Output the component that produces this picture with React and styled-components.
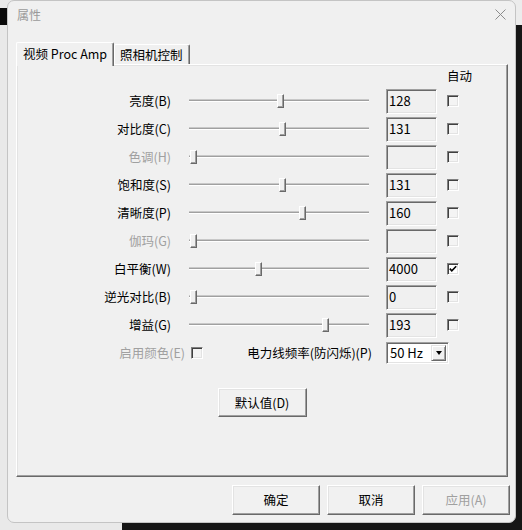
import React from 'react';
import styled, { createGlobalStyle } from 'styled-components';

const GlobalStyle = createGlobalStyle`
  html, body {
    margin: 0;
    padding: 0;
  }
  body {
    font-family: "Noto Sans CJK SC", "Noto Sans", sans-serif;
    font-size: 12.5px;
    color: #000;
  }
`;

const Desktop = styled.div`
  width: 522px;
  height: 530px;
  overflow: hidden;
  box-sizing: border-box;
  padding-left: 7px;
  background:
    linear-gradient(#0b0b0b, #0b0b0b) 0 8px / 7px 17px no-repeat,
    linear-gradient(#e9e9e9, #e9e9e9) 0 0 / 122px 100% no-repeat,
    linear-gradient(#ececec, #ececec) 0 0 / 100% 25px no-repeat,
    #161616;
`;

const Window = styled.div`
  width: 509px;
  height: 523px;
  box-sizing: border-box;
  background: #f0f0f0;
  border: 1px solid #c4c4c4;
  border-radius: 7px;
  display: flex;
  flex-direction: column;
`;

const TitleBar = styled.div`
  height: 27px;
  display: flex;
  align-items: center;
  justify-content: space-between;
  padding: 0 9px;
`;

const Title = styled.span`
  font-size: 12px;
  line-height: 14px;
  color: #9a9a9a;
`;

const Body = styled.div`
  padding: 14px 7px 0 8px;
`;

const TabStrip = styled.div`
  display: flex;
  align-items: flex-end;
  height: 22px;
  position: relative;
  z-index: 2;
`;

const Tab = styled.div`
  box-sizing: border-box;
  height: ${p => (p.$active ? '24px' : '20px')};
  margin-bottom: ${p => (p.$active ? '-2px' : '0')};
  padding: ${p => (p.$active ? '0 6px 2px' : '0 6px 0 5px')};
  display: flex;
  align-items: center;
  background: #f0f0f0;
  border-top: 1px solid #fff;
  border-left: 1px solid #fff;
  border-right: 1px solid #696969;
  box-shadow: inset -1px 0 #a0a0a0;
  border-radius: 2px 2px 0 0;
  line-height: 16px;
  white-space: nowrap;
`;

const Panel = styled.div`
  box-sizing: border-box;
  height: 413px;
  border: 1px solid;
  border-color: #fff #696969 #696969 #fff;
  box-shadow: inset -1px -1px #a0a0a0, inset 1px 1px #e3e3e3;
  display: flex;
  flex-direction: column;
`;

const AutoHeader = styled.div`
  height: 22px;
  display: flex;
  align-items: center;
  padding-left: 430px;
  line-height: 16px;
`;

const Row = styled.div`
  display: flex;
  align-items: center;
  height: 28px;
`;

const Label = styled.div`
  width: 154px;
  text-align: right;
  line-height: 16px;
  white-space: nowrap;
  color: ${p => (p.$disabled ? '#a0a0a0' : '#000')};
`;

const Slider = styled.div`
  position: relative;
  width: 180px;
  height: 14px;
  margin-left: 18px;
  display: flex;
  align-items: center;
`;

const Track = styled.div`
  width: 100%;
  height: 0;
  border-top: 1px solid #a0a0a0;
  border-bottom: 1px solid #fff;
  box-shadow: 0 -1px #c8c8c8;
`;

const Thumb = styled.div`
  position: absolute;
  top: 0;
  width: 7px;
  height: 14px;
  box-sizing: border-box;
  background: #f0f0f0;
  border: 1px solid;
  border-color: #fff #696969 #696969 #fff;
  box-shadow: inset -1px -1px #a0a0a0;
`;

const ValueBox = styled.div`
  box-sizing: border-box;
  width: 51px;
  height: 25px;
  margin-left: 17px;
  padding-left: 2px;
  display: flex;
  align-items: center;
  background: #f0f0f0;
  border: 1px solid;
  border-color: #a0a0a0 #fff #fff #a0a0a0;
  box-shadow: inset 1px 1px #696969, inset -1px -1px #e3e3e3;
  font-size: 13px;
  line-height: 16px;
`;

const CheckBox = styled.div`
  box-sizing: border-box;
  width: 12px;
  height: 12px;
  margin-left: ${p => p.$gap || 10}px;
  background: ${p => (p.$checked ? '#fff' : '#f4f4f4')};
  border: 1px solid;
  border-color: #808080 #fff #fff #808080;
  box-shadow: inset 1px 1px #404040, inset -1px -1px #e3e3e3;
  display: flex;
  align-items: center;
  justify-content: center;
`;

const ExtraRow = styled.div`
  display: grid;
  grid-template-columns: 187px 182px 63px;
  align-items: center;
  height: 28px;
`;

const ColorCell = styled.div`
  display: flex;
  align-items: center;
  justify-content: flex-end;
  padding-right: 1px;
  color: #a0a0a0;
  line-height: 16px;
`;

const PowerLabel = styled.div`
  text-align: right;
  padding-right: 14px;
  line-height: 16px;
  white-space: nowrap;
`;

const Combo = styled.div`
  box-sizing: border-box;
  width: 63px;
  height: 22px;
  display: flex;
  background: #fff;
  border: 1px solid;
  border-color: #a0a0a0 #fff #fff #a0a0a0;
  box-shadow: inset 1px 1px #696969, inset -1px -1px #e3e3e3;
  padding: 2px;
`;

const ComboText = styled.div`
  flex: 1;
  display: flex;
  align-items: center;
  padding-left: 1px;
  font-size: 13px;
  line-height: 16px;
`;

const ComboButton = styled.div`
  box-sizing: border-box;
  width: 15px;
  background: #f0f0f0;
  border: 1px solid;
  border-color: #e3e3e3 #696969 #696969 #e3e3e3;
  box-shadow: inset 1px 1px #fff, inset -1px -1px #a0a0a0;
  display: flex;
  align-items: center;
  justify-content: center;
`;

const Arrow = styled.div`
  width: 0;
  height: 0;
  border-left: 3.5px solid transparent;
  border-right: 3.5px solid transparent;
  border-top: 4px solid #000;
`;

const Button = styled.button`
  box-sizing: border-box;
  width: ${p => p.$w || 88}px;
  height: ${p => p.$h || 30}px;
  padding: 0;
  font: inherit;
  line-height: 16px;
  color: ${p => (p.$disabled ? '#a0a0a0' : '#000')};
  background: #f1f1f1;
  border: 1px solid;
  border-color: #fff #696969 #696969 #fff;
  box-shadow: inset -1px -1px #a0a0a0, inset 1px 1px #e3e3e3;
  border-radius: 0;
`;

const DefaultWrap = styled.div`
  display: flex;
  justify-content: center;
  margin-top: 21px;
`;

const Footer = styled.div`
  display: flex;
  justify-content: flex-end;
  gap: 7px;
  padding: 8px 5px 0 0;
`;

const rows = [
  { label: '亮度(B)', value: '128', pos: 128 / 255 },
  { label: '对比度(C)', value: '131', pos: 131 / 255 },
  { label: '色调(H)', disabled: true, pos: 0 },
  { label: '饱和度(S)', value: '131', pos: 131 / 255 },
  { label: '清晰度(P)', value: '160', pos: 160 / 255 },
  { label: '伽玛(G)', disabled: true, pos: 0 },
  { label: '白平衡(W)', value: '4000', pos: 0.376, auto: true },
  { label: '逆光对比(B)', value: '0', pos: 0 },
  { label: '增益(G)', value: '193', pos: 0.765 },
];

const Check = () => (
  <svg width="8" height="8" viewBox="0 0 8 8">
    <polyline points="0.8,3.6 2.8,5.8 7.2,1.2" fill="none" stroke="#000" strokeWidth="1.6" />
  </svg>
);

const App = () => (
  <Desktop>
    <GlobalStyle />
    <Window>
      <TitleBar>
        <Title>属性</Title>
        <svg width="11" height="11" viewBox="0 0 11 11">
          <path d="M0.5 0.5 L10.5 10.5 M10.5 0.5 L0.5 10.5" stroke="#8c8c8c" strokeWidth="1" />
        </svg>
      </TitleBar>
      <Body>
        <TabStrip>
          <Tab $active>视频 Proc Amp</Tab>
          <Tab>照相机控制</Tab>
        </TabStrip>
        <Panel>
          <AutoHeader>自动</AutoHeader>
          {rows.map(r => (
            <Row key={r.label}>
              <Label $disabled={r.disabled}>{r.label}</Label>
              <Slider>
                <Track />
                <Thumb style={{ left: `${1 + r.pos * 173}px` }} />
              </Slider>
              <ValueBox>{r.value}</ValueBox>
              <CheckBox $checked={r.auto}>{r.auto && <Check />}</CheckBox>
            </Row>
          ))}
          <ExtraRow>
            <ColorCell>
              启用颜色(E)
              <CheckBox $gap={6} />
            </ColorCell>
            <PowerLabel>电力线频率(防闪烁)(P)</PowerLabel>
            <Combo>
              <ComboText>50 Hz</ComboText>
              <ComboButton>
                <Arrow />
              </ComboButton>
            </Combo>
          </ExtraRow>
          <DefaultWrap>
            <Button $w={89} $h={29}>默认值(D)</Button>
          </DefaultWrap>
        </Panel>
      </Body>
      <Footer>
        <Button>确定</Button>
        <Button>取消</Button>
        <Button $disabled>应用(A)</Button>
      </Footer>
    </Window>
  </Desktop>
);

export default App;
